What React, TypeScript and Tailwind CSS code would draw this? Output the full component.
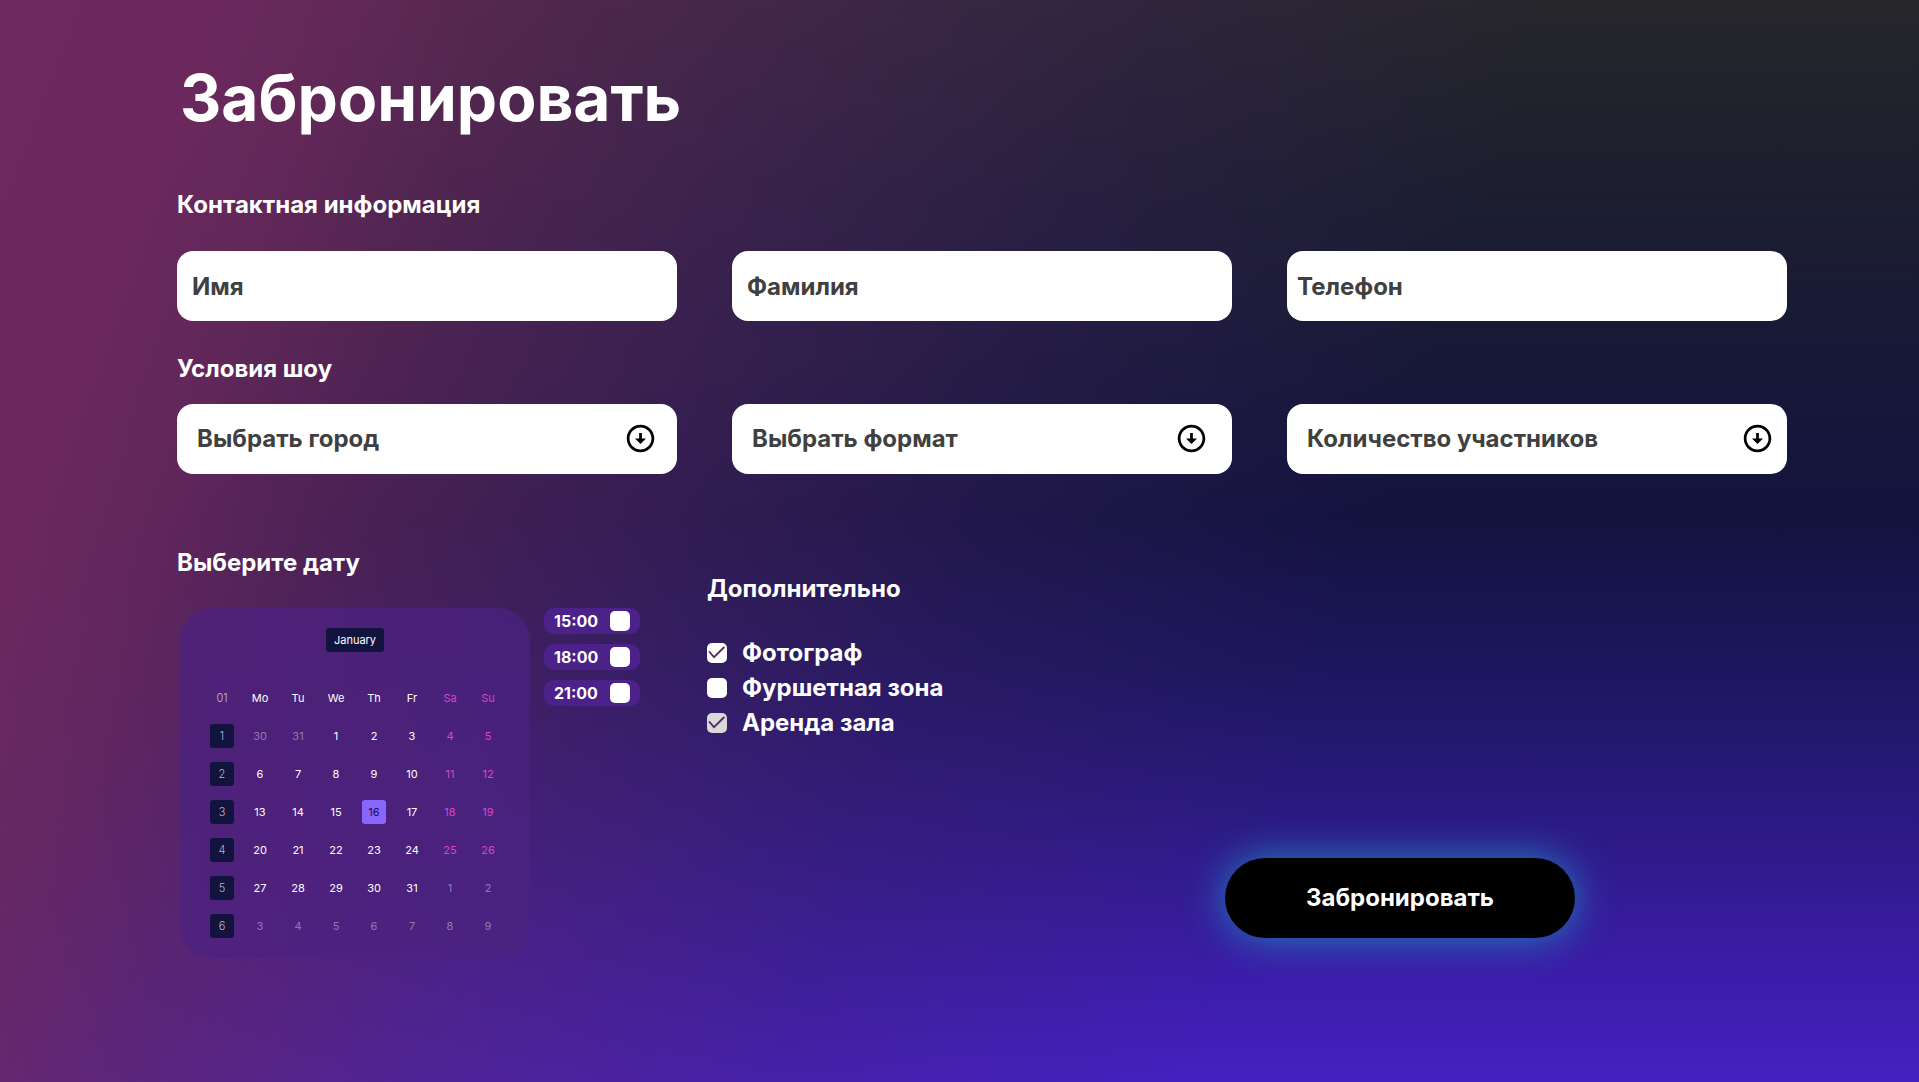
import { useState } from 'react';
import clsx from 'clsx';

const textFields = [
  { id: 'name', label: 'Имя', type: 'text', padding: 'px-[15px]' },
  { id: 'surname', label: 'Фамилия', type: 'text', padding: 'px-[15px]' },
  { id: 'phone', label: 'Телефон', type: 'tel', padding: 'px-[10px]' },
];

const selectFields = [
  { id: 'city', label: 'Выбрать город', options: ['Москва', 'Казань'], icon: 'right-5' },
  { id: 'format', label: 'Выбрать формат', options: ['Стандарт', 'Премиум'], icon: 'right-6' },
  { id: 'people', label: 'Количество участников', options: ['2', '4', '6'], icon: 'right-[13px]' },
];

const weekDays = ['Mo', 'Tu', 'We', 'Th', 'Fr', 'Sa', 'Su'];

const weeks = [
  [30, 31, 1, 2, 3, 4, 5],
  [6, 7, 8, 9, 10, 11, 12],
  [13, 14, 15, 16, 17, 18, 19],
  [20, 21, 22, 23, 24, 25, 26],
  [27, 28, 29, 30, 31, 1, 2],
  [3, 4, 5, 6, 7, 8, 9],
];

const times = ['15:00', '18:00', '21:00'];

const extras = [
  { id: 'photo', label: 'Фотограф', checked: true, muted: false },
  { id: 'buffet', label: 'Фуршетная зона', checked: false, muted: false },
  { id: 'hall', label: 'Аренда зала', checked: true, muted: true },
];

function ArrowCircleDown({ className }: { className?: string }) {
  return (
    <svg viewBox="0 0 24 24" fill="currentColor" aria-hidden="true" className={className}>
      <path d="M12 4c4.41 0 8 3.59 8 8s-3.59 8-8 8-8-3.59-8-8 3.59-8 8-8m0-2C6.48 2 2 6.48 2 12s4.48 10 10 10 10-4.48 10-10S17.52 2 12 2zm1 10V8h-2v4H8l4 4 4-4h-3z" />
    </svg>
  );
}

function CheckBox({ id, defaultChecked, muted }: { id: string; defaultChecked?: boolean; muted?: boolean }) {
  return (
    <span className="relative block size-5">
      <input
        id={id}
        type="checkbox"
        defaultChecked={defaultChecked}
        className={clsx(
          'peer block size-5 appearance-none rounded-[5px]',
          muted ? 'bg-[#d9d9d9]' : 'bg-white'
        )}
      />
      <svg
        viewBox="0 0 20 20"
        fill="none"
        aria-hidden="true"
        className="pointer-events-none absolute inset-0 hidden size-5 stroke-[#5a2662] peer-checked:block"
      >
        <path d="M2.5 9 7 14.2 16.8 4.5" strokeWidth="1.8" strokeLinecap="round" />
      </svg>
    </span>
  );
}

function Calendar() {
  const [selected, setSelected] = useState('2-3');

  return (
    <div className="ml-[3px] flex w-[350px] flex-col items-center rounded-[32px] bg-[#4c2280]/75 pt-5 pb-[13px] text-[11px] text-white">
      {/* Month */}
      <button type="button" className="h-6 w-[58px] rounded-[3px] bg-[#13133f]">
        January
      </button>

      <table className="mt-[27px] table-fixed border-collapse text-center">
        <thead>
          <tr>
            <th className="size-[38px] p-0 font-light text-white/70">01</th>
            {weekDays.map((day, i) => (
              <th key={day} className={clsx('size-[38px] p-0 font-normal', i > 4 && 'text-[#d946c8]')}>
                {day}
              </th>
            ))}
          </tr>
        </thead>
        <tbody>
          {weeks.map((week, row) => (
            <tr key={row}>
              <th className="size-[38px] p-0 font-light">
                <span className="mx-auto flex size-6 items-center justify-center rounded-[3px] bg-[#13133f] text-white/70">
                  {row + 1}
                </span>
              </th>
              {week.map((day, col) => {
                const id = `${row}-${col}`;
                const outside = (row === 0 && day > 7) || (row > 3 && day < 20);
                return (
                  <td key={id} className="size-[38px] p-0">
                    <button
                      type="button"
                      onClick={() => setSelected(id)}
                      className={clsx(
                        'mx-auto flex size-6 items-center justify-center rounded-[3px]',
                        selected === id && 'bg-[#8766ff] text-[#13133f]',
                        selected !== id && outside && 'text-white/40',
                        selected !== id && !outside && col > 4 && 'text-[#d946c8]'
                      )}
                    >
                      {day}
                    </button>
                  </td>
                );
              })}
            </tr>
          ))}
        </tbody>
      </table>
    </div>
  );
}

function App() {
  return (
    <main className="min-h-screen bg-[linear-gradient(109deg,#6e295f_0%,#6e295ff7_9%,#6c295fdb_15%,#67285faf_22%,#5c286a78_35%,#46246a46_50%,#2c1f6a00_68%),linear-gradient(180deg,#26262a_0%,#1c1e30_18%,#13133f_48%,#1c165c_61%,#2d1a86_77%,#3c1dab_91%,#4520c0_100%)] pt-[59px] pr-[132px] pb-[59px] pl-[177px] font-['Inter',sans-serif] text-white">
      <form onSubmit={(e) => e.preventDefault()}>
        <h1 className="ml-[3px] text-[64px] leading-[78px] font-bold">Забронировать</h1>

        {/* Contacts */}
        <h2 className="mt-[53px] text-2xl leading-[29px] font-bold">Контактная информация</h2>
        <div className="mt-8 grid grid-cols-3 gap-[55px]">
          {textFields.map((field) => (
            <input
              key={field.id}
              type={field.type}
              aria-label={field.label}
              placeholder={field.label}
              className={clsx(
                'h-[70px] w-full rounded-2xl bg-white text-2xl font-bold text-[#404040] placeholder:text-[#404040]',
                field.padding
              )}
            />
          ))}
        </div>

        {/* Show conditions */}
        <h2 className="mt-[33px] text-2xl leading-[29px] font-bold">Условия шоу</h2>
        <div className="mt-[21px] grid grid-cols-3 gap-[55px]">
          {selectFields.map((field) => (
            <div key={field.id} className="relative">
              <select
                aria-label={field.label}
                defaultValue=""
                className="h-[70px] w-full appearance-none rounded-2xl bg-white px-5 text-2xl font-bold text-[#404040]"
              >
                <option value="">{field.label}</option>
                {field.options.map((option) => (
                  <option key={option}>{option}</option>
                ))}
              </select>
              <ArrowCircleDown
                className={clsx('pointer-events-none absolute top-[18px] size-[33px] text-black', field.icon)}
              />
            </div>
          ))}
        </div>

        <div className="mt-[74px] flex">
          {/* Date and time */}
          <section>
            <h2 className="text-2xl leading-[29px] font-bold">Выберите дату</h2>
            <div className="mt-[31px] flex items-start gap-[14px]">
              <Calendar />
              <div className="flex flex-col gap-[10px]">
                {times.map((time) => (
                  <label
                    key={time}
                    htmlFor={time}
                    className="flex h-[26px] w-24 items-center justify-between rounded-[10px] bg-[#4c2189] px-[10px] text-base font-bold"
                  >
                    {time}
                    <CheckBox id={time} />
                  </label>
                ))}
              </div>
            </div>
          </section>

          {/* Extras */}
          <section className="ml-[67px] pt-[26px]">
            <h2 className="text-2xl leading-[29px] font-bold">Дополнительно</h2>
            <div className="mt-[35px] flex flex-col gap-[6px]">
              {extras.map((extra) => (
                <label
                  key={extra.id}
                  htmlFor={extra.id}
                  className="flex items-center gap-[15px] text-2xl leading-[29px] font-bold"
                >
                  <CheckBox id={extra.id} defaultChecked={extra.checked} muted={extra.muted} />
                  {extra.label}
                </label>
              ))}
            </div>
          </section>

          <button
            type="submit"
            className="mr-[212px] mb-5 ml-auto h-20 w-[350px] self-end rounded-full bg-black text-2xl font-bold shadow-[0_0_40px_#2080c0]"
          >
            Забронировать
          </button>
        </div>
      </form>
    </main>
  );
}

export default App;
